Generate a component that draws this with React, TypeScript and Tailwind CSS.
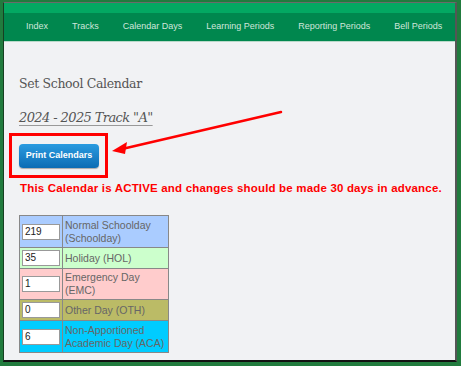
import React from "react";

const navItems = ["Index", "Tracks", "Calendar Days", "Learning Periods", "Reporting Periods", "Bell Periods"];

const rows = [
  { v: "219", label: ["Normal Schoolday", "(Schoolday)"], bg: "bg-[#aaccff]", h: "h-[32px]" },
  { v: "35", label: ["Holiday (HOL)"], bg: "bg-[#ccffcc]", h: "h-[21px]" },
  { v: "1", label: ["Emergency Day", "(EMC)"], bg: "bg-[#ffcccc]", h: "h-[31px]" },
  { v: "0", label: ["Other Day (OTH)"], bg: "bg-[#bbbb66]", h: "h-[21px]" },
  { v: "6", label: ["Non-Apportioned", "Academic Day (ACA)"], bg: "bg-[#00ccff]", h: "h-[32px]" },
];

export default function App() {
  return (
    <div className="w-[461px] h-[366px] bg-[#217b3e] pt-[2px] pl-[3px] pr-[4px] pb-[4px] overflow-hidden">
      <div className="w-full h-full flex flex-col border-t border-l border-t-[#6a6a6a] border-l-[#163f22] border-r-2 border-b-2 border-r-[#555] border-b-[#111] bg-[#f1f2f4] overflow-hidden">
        <div className="h-[10px] bg-[#03a862] shrink-0" />
        <div className="h-[29px] bg-[#00874e] flex items-center gap-[24px] pl-[22px] shrink-0 border-b border-[#b9d9c9]">
          {navItems.map((n) => (
            <span key={n} className="text-[9px] text-[#cfe6da] whitespace-nowrap" style={{ fontFamily: '"Liberation Sans", Arial, sans-serif' }}>
              {n}
            </span>
          ))}
        </div>
        <div className="relative flex-1 pl-[15px] pt-[33px]">
          <div className="text-[12.5px] leading-[18px] text-[#555] tracking-[-0.35px]" style={{ fontFamily: '"DejaVu Serif", serif' }}>
            Set School Calendar
          </div>
          <div className="mt-[16px] text-[13px] leading-[18px] text-[#555] italic underline decoration-[#999] underline-offset-[3px] tracking-[-0.6px]" style={{ fontFamily: '"DejaVu Serif", serif' }}>
            2024 - 2025 Track "A"
          </div>
          <div className="mt-[6px] -ml-[10px] w-[99px] h-[45px] border-[3px] border-[#ff0000] flex items-center pl-[7px]">
            <button className="w-[80px] h-[24px] rounded-[4px] bg-gradient-to-b from-[#2a9be0] to-[#0a6cb4] text-white text-[9px] font-bold shadow-[0_1px_1px_rgba(0,0,0,0.3)]" style={{ fontFamily: '"Liberation Sans", Arial, sans-serif' }}>
              Print Calendars
            </button>
          </div>
          <div className="mt-[3px] pl-[1px] text-[11.5px] leading-[14px] font-bold text-[#ff0000] whitespace-nowrap tracking-[0.18px]" style={{ fontFamily: '"Liberation Sans", Arial, sans-serif' }}>
            This Calendar is ACTIVE and changes should be made 30 days in advance.
          </div>
          <table className="mt-[20px] border-collapse border border-[#888]" style={{ fontFamily: '"Liberation Sans", Arial, sans-serif' }}>
            <tbody>
              {rows.map((r) => (
                <tr key={r.v} className={`${r.bg} ${r.h}`}>
                  <td className="border border-[#888] w-[43px] px-[2px] align-middle">
                    <div className="w-[38px] h-[16px] bg-white border border-[#999] text-[10px] leading-[14px] pl-[2px] text-[#222]">{r.v}</div>
                  </td>
                  <td className="border border-[#888] w-[106px] pl-[2px] align-middle text-[10.5px] leading-[13px] text-[#666]">
                    {r.label.map((l) => (
                      <div key={l}>{l}</div>
                    ))}
                  </td>
                </tr>
              ))}
            </tbody>
          </table>
          <svg className="absolute left-0 top-0 pointer-events-none" width="455" height="320" viewBox="0 0 455 320">
            <line x1="277" y1="70" x2="118" y2="107" stroke="#ff0000" strokeWidth="2.5" strokeLinecap="round" />
            <polygon points="108,109 123,100 121,112" fill="#ff0000" />
          </svg>
        </div>
      </div>
    </div>
  );
}
